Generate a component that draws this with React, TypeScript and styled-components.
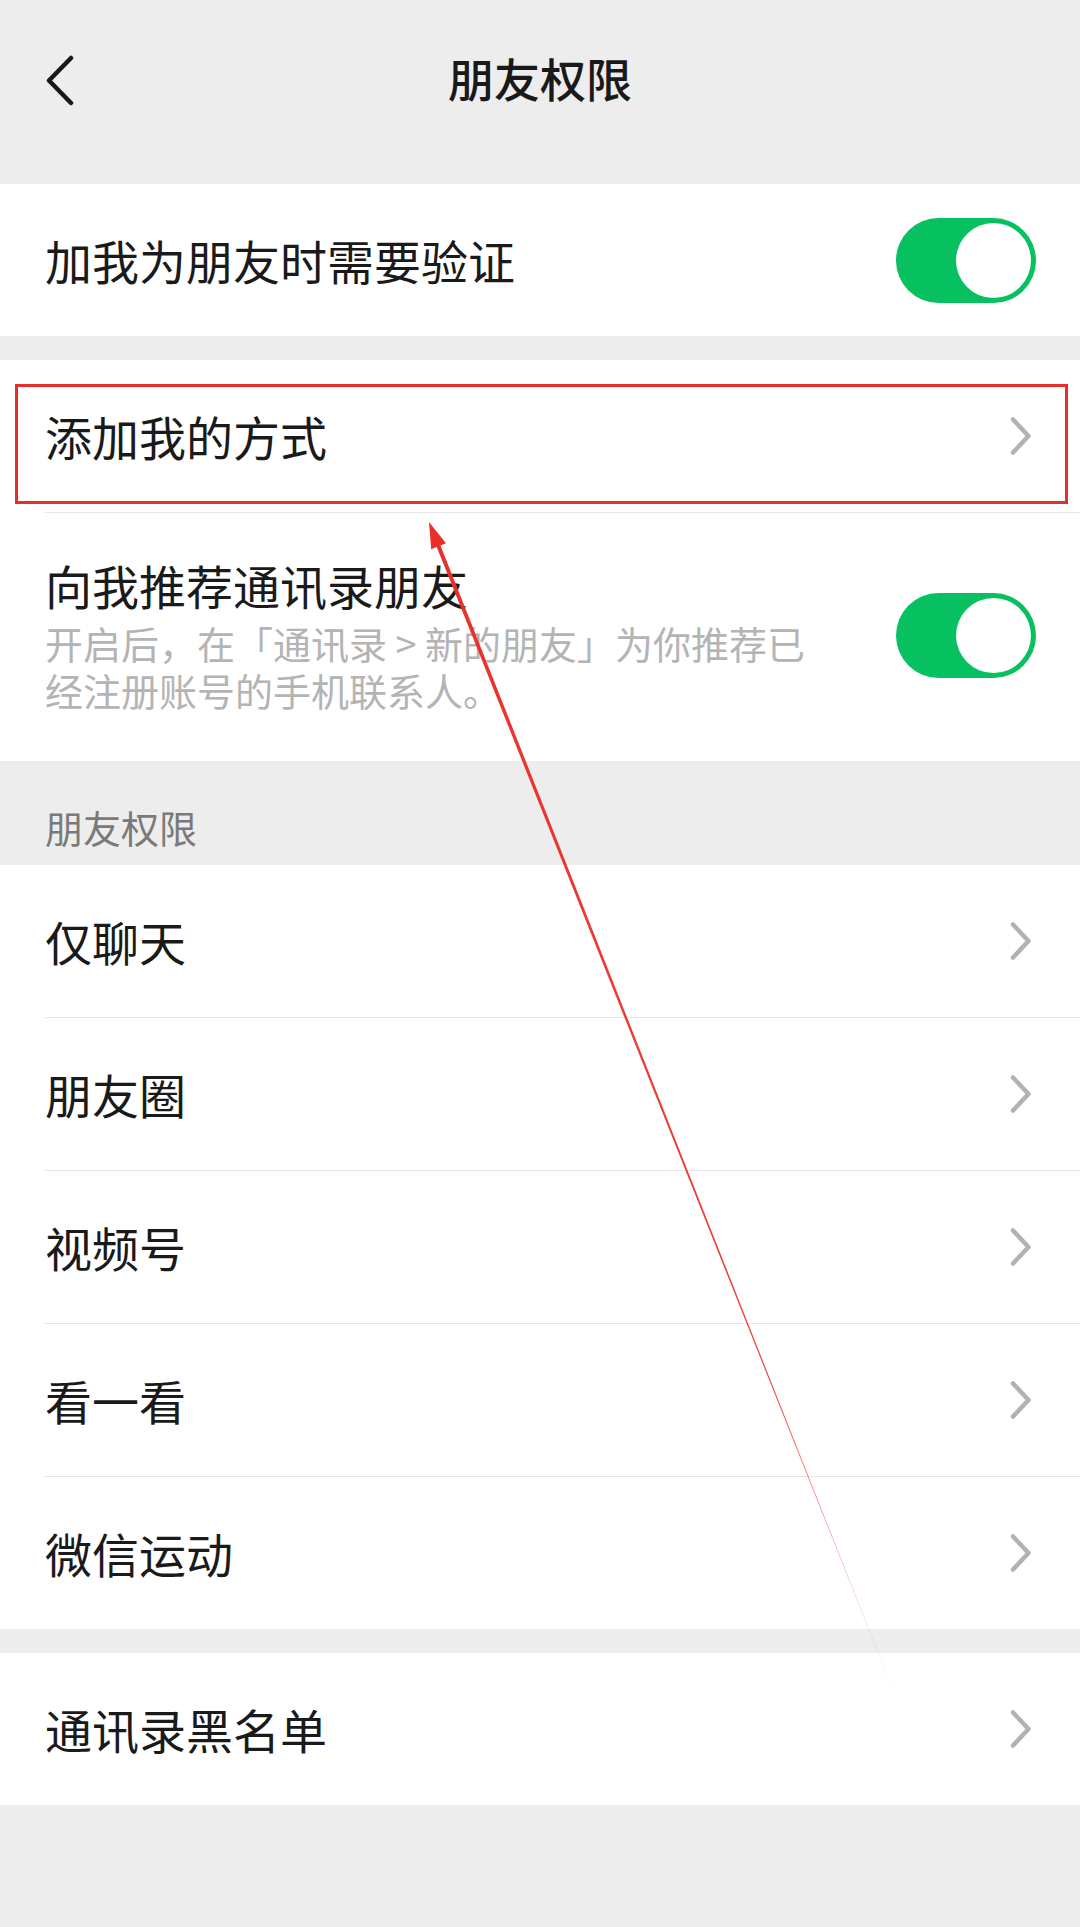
import React from 'react';
import styled, { createGlobalStyle } from 'styled-components';

const GlobalStyle = createGlobalStyle`
  html, body {
    margin: 0;
    padding: 0;
    background: #ededed;
  }
  body {
    font-family: "Noto Sans CJK SC", "Noto Sans", sans-serif;
    color: #1a1a1a;
  }
`;

const Page = styled.div`
  position: relative;
  width: 1080px;
  min-height: 1927px;
  background: #ededed;
  overflow: hidden;
`;

const NavBar = styled.header`
  display: grid;
  grid-template-columns: 1fr auto 1fr;
  align-items: center;
  height: 168px;
  padding: 0 44px 16px;
`;

const BackButton = styled.div`
  display: flex;
  align-items: center;
  margin-top: -6px;
`;

const Title = styled.h1`
  margin: -14px 0 0;
  font-size: 46px;
  line-height: 56px;
  font-weight: 500;
  color: #191919;
`;

const Card = styled.section<{ $gapTop?: number }>`
  background: #fff;
  margin-top: ${({ $gapTop }) => $gapTop ?? 0}px;
`;

const Row = styled.div<{ $tall?: boolean }>`
  display: flex;
  align-items: center;
  gap: 30px;
  height: ${({ $tall }) => ($tall ? 'auto' : '152px')};
  padding: ${({ $tall }) => ($tall ? '44px 44px 48px 45px' : '0 44px 0 45px')};
  box-sizing: border-box;
`;

const Divider = styled.div`
  height: 1px;
  margin-left: 45px;
  background: #e6e6e6;
`;

const TextBlock = styled.div`
  flex: 1;
  min-width: 0;
`;

const Label = styled.div`
  font-size: 47px;
  line-height: 56px;
  color: #1a1a1a;
`;

const Desc = styled.div`
  max-width: 785px;
  margin-top: 6px;
  font-size: 38px;
  line-height: 47px;
  color: #b4b4b4;
`;

const SectionHeader = styled.div`
  height: 104px;
  box-sizing: border-box;
  padding: 40px 45px 0;
  font-size: 38px;
  line-height: 52px;
  color: #7a7a7a;
`;

const Switch = styled.div<{ $on?: boolean }>`
  position: relative;
  flex: none;
  width: 140px;
  height: 85px;
  border-radius: 43px;
  background: ${({ $on }) => ($on ? '#07c160' : '#e5e5e5')};

  &::after {
    content: '';
    position: absolute;
    top: 5px;
    left: ${({ $on }) => ($on ? '60px' : '5px')};
    width: 75px;
    height: 75px;
    border-radius: 50%;
    background: #fff;
  }
`;

const Annotation = styled.svg`
  position: absolute;
  left: 0;
  top: 0;
  pointer-events: none;
`;

const Chevron = () => (
  <svg width="26" height="38" viewBox="0 0 26 38" style={{ flex: 'none' }}>
    <path d="M3 2.5 L18.5 19 L3 35.5" fill="none" stroke="#b2b2b2" strokeWidth="4.5" strokeLinecap="round" strokeLinejoin="round" />
  </svg>
);

const BackIcon = () => (
  <svg width="32" height="52" viewBox="0 0 32 52">
    <path d="M27 3 L5 25.5 L27 48" fill="none" stroke="#181818" strokeWidth="4.5" strokeLinecap="round" strokeLinejoin="round" />
  </svg>
);

const permissions = ['仅聊天', '朋友圈', '视频号', '看一看', '微信运动'];

export default function App() {
  return (
    <Page>
      <GlobalStyle />
      <NavBar>
        <BackButton>
          <BackIcon />
        </BackButton>
        <Title>朋友权限</Title>
        <div />
      </NavBar>

      <Card>
        <Row>
          <TextBlock>
            <Label>加我为朋友时需要验证</Label>
          </TextBlock>
          <Switch $on />
        </Row>
      </Card>

      <Card $gapTop={24}>
        <Row>
          <TextBlock>
            <Label>添加我的方式</Label>
          </TextBlock>
          <Chevron />
        </Row>
        <Divider />
        <Row $tall>
          <TextBlock>
            <Label>向我推荐通讯录朋友</Label>
            <Desc>开启后，在「通讯录 &gt; 新的朋友」为你推荐已经注册账号的手机联系人。</Desc>
          </TextBlock>
          <Switch $on />
        </Row>
      </Card>

      <SectionHeader>朋友权限</SectionHeader>

      <Card>
        {permissions.map((name, i) => (
          <React.Fragment key={name}>
            {i > 0 && <Divider />}
            <Row>
              <TextBlock>
                <Label>{name}</Label>
              </TextBlock>
              <Chevron />
            </Row>
          </React.Fragment>
        ))}
      </Card>

      <Card $gapTop={24}>
        <Row>
          <TextBlock>
            <Label>通讯录黑名单</Label>
          </TextBlock>
          <Chevron />
        </Row>
      </Card>

      <Annotation width="1080" height="1927" viewBox="0 0 1080 1927">
        <defs>
          <linearGradient id="arrowFade" gradientUnits="userSpaceOnUse" x1="429" y1="522" x2="910" y2="1733">
            <stop offset="0" stopColor="#e8302a" stopOpacity="1" />
            <stop offset="0.7" stopColor="#e8302a" stopOpacity="0.9" />
            <stop offset="1" stopColor="#e8302a" stopOpacity="0" />
          </linearGradient>
        </defs>
        <rect x="16.5" y="385.5" width="1050" height="117" fill="none" stroke="#e5302a" strokeWidth="3" />
        <polygon
          points="429,522 446,543.2 440.5,545.5 910,1733 436.7,546.9 431.2,549.2"
          fill="url(#arrowFade)"
        />
      </Annotation>
    </Page>
  );
}
